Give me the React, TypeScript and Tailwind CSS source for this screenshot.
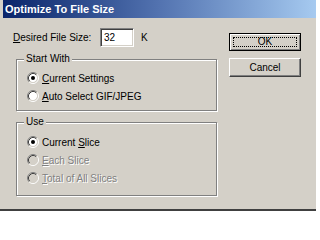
import React from 'react';

const Radio: React.FC<{ checked?: boolean; disabled?: boolean }> = ({ checked, disabled }) => (
  <svg width="12" height="12" viewBox="0 0 12 12" className="shrink-0">
    <circle cx="6" cy="6" r="4.2" fill={disabled ? '#d4d0c8' : '#ffffff'} />
    <path d="M2.11 9.89 A5.5 5.5 0 0 1 9.89 2.11" fill="none" stroke="#808080" />
    <path d="M9.89 2.11 A5.5 5.5 0 0 1 2.11 9.89" fill="none" stroke="#ffffff" />
    <path d="M2.82 9.18 A4.5 4.5 0 0 1 9.18 2.82" fill="none" stroke="#404040" />
    <path d="M9.18 2.82 A4.5 4.5 0 0 1 2.82 9.18" fill="none" stroke="#d4d0c8" />
    {checked && <circle cx="6" cy="6" r="2" fill="#000000" />}
  </svg>
);

const Option: React.FC<{ label: React.ReactNode; checked?: boolean; disabled?: boolean }> = ({
  label,
  checked,
  disabled,
}) => (
  <div className="h-[18px] flex items-center gap-[3px]">
    <Radio checked={checked} disabled={disabled} />
    <span className={disabled ? 'text-[#808080] [text-shadow:1px_1px_0_#ffffff]' : ''}>{label}</span>
  </div>
);

const Group: React.FC<{ title: string; className: string; children: React.ReactNode }> = ({
  title,
  className,
  children,
}) => (
  <div
    className={`relative ml-[3px] w-[201px] border border-[#808080] shadow-[1px_1px_0_#ffffff,inset_1px_1px_0_#ffffff] pl-[10px] ${className}`}
  >
    <span className="absolute left-[7px] top-[-7px] bg-[#d4d0c8] px-[2px] leading-[12px]">{title}</span>
    {children}
  </div>
);

export default function App() {
  return (
    <div className="w-[316px] h-[211px] bg-[#d4d0c8] flex flex-col overflow-hidden border-b-2 border-[#404040] font-['Liberation_Sans',Arial,sans-serif] text-[10px] text-black">
      {/* Title bar */}
      <div className="ml-[3px] h-[18px] shrink-0 bg-linear-to-r from-[#0a246a] via-[#5373b0] to-[#a6caf0] flex items-center pl-[2px] text-white font-bold text-[11px]">
        Optimize To File Size
      </div>

      <div className="flex flex-1">
        {/* Left column */}
        <div className="w-[218px] pl-[13px] flex flex-col">
          <div className="mt-[10px] h-[19px] flex items-center">
            <span className="w-[87px]">
              <span className="underline">D</span>esired File Size:
            </span>
            <div className="w-[34px] h-[19px] bg-white border border-t-[#808080] border-l-[#808080] border-b-white border-r-white shadow-[inset_1px_1px_0_#404040,inset_-1px_-1px_0_#d4d0c8] flex items-center pl-[3px]">
              32
            </div>
            <span className="ml-[7px]">K</span>
          </div>

          <Group title="Start With" className="mt-[12px] h-[52px] pt-[9px]">
            <Option checked label={<><span className="underline">C</span>urrent Settings</>} />
            <Option label={<><span className="underline">A</span>uto Select GIF/JPEG</>} />
          </Group>

          <Group title="Use" className="mt-[11px] h-[74px] pt-[10px]">
            <Option checked label={<>Current <span className="underline">S</span>lice</>} />
            <Option disabled label={<><span className="underline">E</span>ach Slice</>} />
            <Option disabled label={<><span className="underline">T</span>otal of All Slices</>} />
          </Group>
        </div>

        {/* Buttons */}
        <div className="ml-[11px] flex flex-col">
          <button className="mt-[15px] w-[72px] h-[18px] border border-black shadow-[inset_1px_1px_0_#ffffff,inset_-1px_-1px_0_#808080] p-[3px]">
            <div className="w-full h-full border border-dotted border-black flex items-center justify-center leading-none">
              OK
            </div>
          </button>
          <button className="mt-[7px] w-[72px] h-[19px] border border-t-white border-l-white border-b-[#404040] border-r-[#404040] shadow-[inset_-1px_-1px_0_#808080] flex items-center justify-center leading-none">
            Cancel
          </button>
        </div>
      </div>
    </div>
  );
}
